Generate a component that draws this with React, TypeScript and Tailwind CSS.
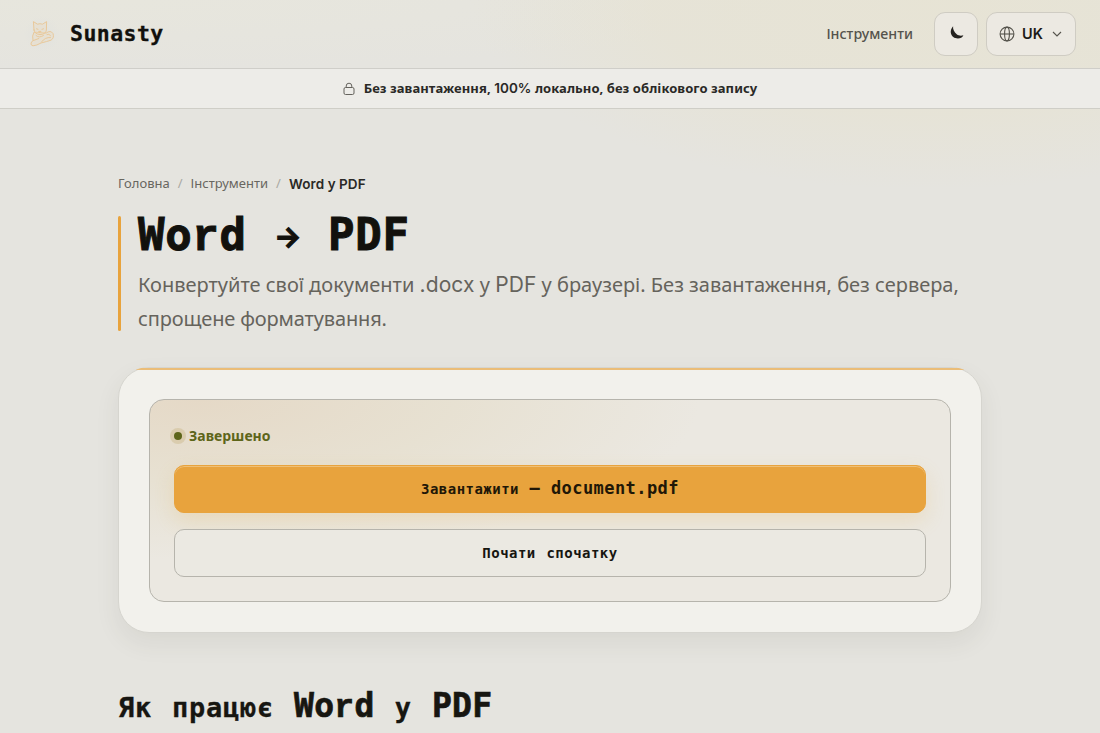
import type { ReactNode } from "react";

function Cat() {
  return (
    <svg width="26" height="28" viewBox="0 0 26 28" fill="#ead9bf" fillOpacity="0.35" stroke="#e9c99b" strokeWidth="1" strokeLinejoin="round" strokeLinecap="round">
      <path d="M4.800 12.500Q2.800 16 4 20.300L2 23Q1.500 25.500 4 25.800 7.500 25.600 12 23 18 21.500 22 20.200 25.500 18 24 13.500 21.500 9.800 17.500 12.800Z" />
      <path d="M5 10 4.400 1.600 8.500 4.200Q11 3.200 13.500 4.200L17.600 1.600 17.400 10Q17 14.200 11 14.600 5.300 14 5 10Z" />
      <path fill="none" d="M7.500 8.800l1.500.5M14.500 8.800l-1.500.5M10 11.400h2l-1 1zM4.200 20.600 9.800 18.500M12.500 22Q16 17 21.500 17.500M7 15.500Q10 18.500 14.500 15.500M18 14.500Q20 13.500 21.500 15.500" />
    </svg>
  );
}

function Moon() {
  return (
    <svg className="-mt-[3px]" width="15" height="15" viewBox="0 0 15 15" fill="#24221f">
      <path d="M4.100 1.300C2.500 3 1.400 5.300 1.800 7.800c.6 3.700 3.700 5.700 7.100 5.700 2.400 0 4.600-1.200 5.500-3.300-2.100.8-4.700.6-6.700-1C5.200 7.300 3.700 4.300 4.100 1.300Z" />
    </svg>
  );
}

function Globe() {
  return (
    <svg width="16" height="16" viewBox="0 0 16 16" fill="none" stroke="#55534c" strokeWidth="1.100">
      <circle cx="8" cy="8" r="6.900" />
      <ellipse cx="8" cy="8" rx="2.400" ry="6.900" />
      <path d="M1.100 8h13.800" />
    </svg>
  );
}

function Lock() {
  return (
    <svg width="12" height="14" viewBox="0 0 12 14" fill="none" stroke="#65635d" strokeWidth="1">
      <rect x="1" y="5.500" width="10" height="7" rx="1.500" />
      <path d="M3.200 5.500V4a2.800 2.800 0 0 1 5.600 0v1.500" />
    </svg>
  );
}

function SmallCyr({ children }: { children: ReactNode }) {
  return <span className="text-[14px] tracking-[0.470px]">{children}</span>;
}

function HeadCyr({ children }: { children: ReactNode }) {
  return <span className="text-[27px] tracking-[0.700px] [-webkit-text-stroke:0.3px_#171611]">{children}</span>;
}

function SlabR() {
  return <span className="font-['Liberation_Mono']">r</span>;
}

export default function App() {
  return (
    <div className="flex h-[733px] flex-col overflow-hidden bg-[#e5e4df] bg-[radial-gradient(ellipse_460px_190px_at_930px_0px,rgba(232,227,206,0.6),rgba(232,226,200,0.35)_60%,transparent),radial-gradient(ellipse_700px_70px_at_100px_0px,rgba(232,231,220,0.7),transparent)] font-['Noto_Sans','Open_Sans',sans-serif] text-[#1c1b18]">
      <header className="flex h-[69px] shrink-0 items-center justify-between border-b border-[#cfcec9] pr-6 pl-6">
        <div className="flex items-center gap-[10px]">
          <span className="flex size-9 items-center justify-center rounded-full bg-[radial-gradient(circle,rgba(225,226,222,0.9),transparent_72%)]"><Cat /></span>
          <span className="font-['DejaVu_Sans_Mono',monospace] text-[21.500px] font-bold tracking-[0.450px] text-[#12110d] [-webkit-text-stroke:0.3px_#12110d]">Sunasty</span>
        </div>
        <div className="flex items-center">
          <span className="mr-[21px] -mt-px text-[14.200px] font-medium text-[#55534c]">Інструменти</span>
          <button className="mr-2 flex size-11 items-center justify-center rounded-[11px] border border-[#cfccc3] bg-[#ece9e2]"><Moon /></button>
          <button className="flex h-11 w-[90px] items-center rounded-[11px] border border-[#cfccc3] bg-[#ece9e2] pl-3">
            <Globe />
            <span className="ml-[7px] font-['Inter',sans-serif] text-[14.500px] font-semibold">UK</span>
            <svg className="ml-[9px]" width="10" height="6" viewBox="0 0 10 6" fill="none" stroke="#55534c" strokeWidth="1.100"><path d="m1 1 4 4 4-4" /></svg>
          </button>
        </div>
      </header>
      <div className="flex h-10 shrink-0 items-center justify-center gap-[9px] border-b border-[#cfcec7] bg-[#edece8]">
        <Lock />
        <span className="text-[13px] font-bold tracking-[0.070px] whitespace-nowrap text-[#2a2926]">Без завантаження, <span className="font-['Inter',sans-serif] text-[13.500px] font-semibold">100%</span> локально, без облікового запису</span>
      </div>
      <main className="mx-auto w-[864px] pt-[65px]">
        <nav className="flex h-5 items-center gap-[8px] text-[13px] whitespace-nowrap text-[#68665f]">
          <span>Головна</span><span className="text-[#aaa9a3]">/</span><span>Інструменти</span><span className="text-[#aaa9a3]">/</span>
          <span className="font-['Inter',sans-serif] text-[13.500px] font-semibold tracking-[0.150px] text-[#2a2926]">Word <span className="font-['Noto_Sans']">у</span> PDF</span>
        </nav>
        <div className="mt-[22px] flex h-[115px] gap-[17px]">
          <div className="w-[3px] shrink-0 rounded-full bg-[#e8a33d]" />
          <div>
            <h1 className="h-[40px] font-['DejaVu_Sans_Mono',monospace] text-[44px] leading-[38px] font-bold tracking-[0.700px] whitespace-pre text-[#12110d] [-webkit-text-stroke:1px_#12110d]">Wo<SlabR />d <span className="relative -top-[3px] inline-block w-[27px] text-center font-['Inter',sans-serif] text-[29px] tracking-normal">→</span> PDF</h1>
            <p className="mt-[12px] text-[20px] leading-[34px] whitespace-nowrap text-[#65635c]">Конвертуйте свої документи <span className="font-['Inter',sans-serif] text-[21px] tracking-[0.100px]">.docx</span> у <span className="font-['Inter',sans-serif] text-[21px] tracking-[0.100px]">PDF</span> у браузері. Без завантаження, без сервера,<br /><span className="tracking-[-0.140px]">спрощене форматування.</span></p>
          </div>
        </div>
        <section className="relative mt-[36px] h-[266px] rounded-[31px] border border-[#d6d5cf] bg-[#f2f1ec] px-[30px] pt-[31px] shadow-[0_10px_24px_rgba(70,70,50,0.08)]">
          <div className="pointer-events-none absolute inset-[-1px] overflow-hidden rounded-[31px] pt-px"><div className="h-[2px] bg-[#ebbd78]" /></div>
          <div className="h-[203px] rounded-[15px] border border-[#b6b4ac] bg-[#ebe8e1] bg-[radial-gradient(ellipse_500px_160px_at_50px_0px,#e5d9c7,rgba(230,223,206,0.8)_50%,transparent)] px-6 pt-6">
            <div className="flex h-6 items-center gap-[7px]">
              <span className="size-2 rounded-full bg-[#5d651a] shadow-[0_0_0_4px_rgba(205,187,143,0.5)]" />
              <span className="-mt-[2px] text-[14px] font-bold text-[#5d651a]">Завершено</span>
            </div>
            <button className="mt-[17px] flex h-12 w-full items-center justify-center rounded-[10px] border border-[#e8a33d] bg-[#e8a33d] font-['DejaVu_Sans_Mono',monospace] text-[17px] font-bold tracking-[0.430px] whitespace-pre text-[#211707] shadow-[inset_0_1px_0_#efbf76,0_8px_20px_rgba(232,175,75,0.20)]"><span><SmallCyr>Завантажити</SmallCyr> — document.pdf</span></button>
            <button className="mt-4 flex h-12 w-full items-center justify-center rounded-[10px] border border-[#b6b4ac] bg-[#ebe9e2] font-['DejaVu_Sans_Mono',monospace] text-[17px] font-bold tracking-[0.430px] whitespace-pre text-[#171611]"><span><SmallCyr>Почати</SmallCyr> <SmallCyr>спочатку</SmallCyr></span></button>
          </div>
        </section>
        <h2 className="mt-[51px] h-11 font-['DejaVu_Sans_Mono',monospace] text-[33px] leading-[44px] font-bold tracking-[0.300px] whitespace-pre text-[#171611] [-webkit-text-stroke:0.7px_#171611]"><HeadCyr>Як</HeadCyr> <HeadCyr>працює</HeadCyr> Wo<SlabR />d <HeadCyr>у</HeadCyr> PDF</h2>
      </main>
    </div>
  );
}
